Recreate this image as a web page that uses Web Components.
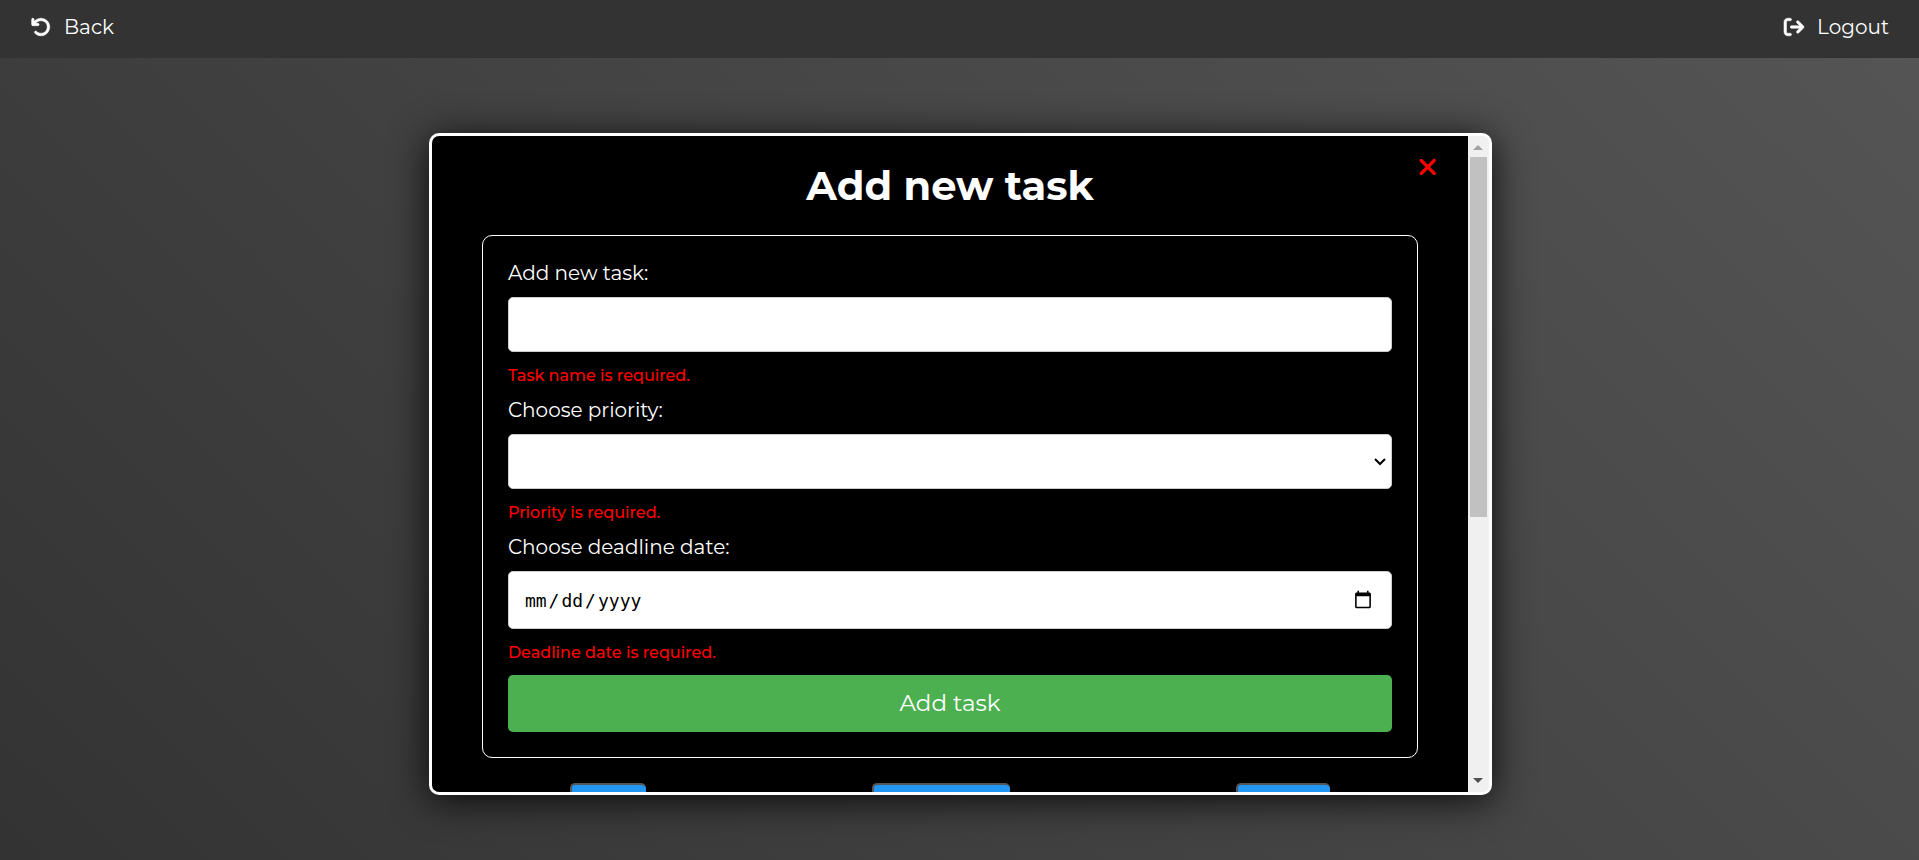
<!DOCTYPE html>
<html lang="en-US">
<head>
<meta charset="utf-8">
<meta name="viewport" content="width=device-width, initial-scale=1">
<title>Add new task</title>
<style>
  html, body { height: 100%; }
  body {
    margin: 0;
    font-family: Montserrat, Inter, sans-serif;
    font-size: 20px;
    line-height: 24px;
    color: #fff;
    background: linear-gradient(45deg, #333, #555);
  }
</style>
</head>
<body>
<task-app></task-app>

<script>
const ICONS = {
  back: ['0 0 512 512', 'M125.7 160H176c17.7 0 32 14.3 32 32s-14.3 32-32 32H48c-17.7 0-32-14.3-32-32V64c0-17.7 14.3-32 32-32s32 14.3 32 32v51.2L97.6 97.6c87.5-87.5 229.3-87.5 316.8 0s87.5 229.3 0 316.8s-229.3 87.5-316.8 0c-12.5-12.5-12.5-32.8 0-45.3s32.8-12.5 45.3 0c62.5 62.5 163.8 62.5 226.3 0s62.5-163.8 0-226.3s-163.8-62.5-226.3 0L125.7 160z'],
  logout: ['0 0 512 512', 'M502.6 278.6c12.5-12.5 12.5-32.8 0-45.3l-128-128c-12.5-12.5-32.8-12.5-45.3 0s-12.5 32.8 0 45.3L402.7 224 192 224c-17.7 0-32 14.3-32 32s14.3 32 32 32l210.7 0-73.4 73.4c-12.5 12.5-12.5 32.8 0 45.3s32.8 12.5 45.3 0l128-128zM160 96c17.7 0 32-14.3 32-32s-14.3-32-32-32L96 32C43 32 0 75 0 128L0 384c0 53 43 96 96 96l64 0c17.7 0 32-14.3 32-32s-14.3-32-32-32l-64 0c-17.7 0-32-14.3-32-32l0-256c0-17.7 14.3-32 32-32l64 0z'],
  close: ['0 0 384 512', 'M342.6 150.6c12.5-12.5 12.5-32.8 0-45.3s-32.8-12.5-45.3 0L192 210.7 86.6 105.4c-12.5-12.5-32.8-12.5-45.3 0s-12.5 32.8 0 45.3L146.7 256 41.4 361.4c-12.5 12.5-12.5 32.8 0 45.3s32.8 12.5 45.3 0L192 301.3 297.4 406.6c12.5 12.5 32.8 12.5 45.3 0s12.5-32.8 0-45.3L237.3 256 342.6 150.6z']
};
const icon = name =>
  `<svg viewBox="${ICONS[name][0]}" fill="currentColor" aria-hidden="true"><path d="${ICONS[name][1]}"/></svg>`;

class BaseElement extends HTMLElement {
  constructor() {
    super();
    this.attachShadow({ mode: 'open' });
  }
  connectedCallback() {
    this.shadowRoot.innerHTML = `<style>*{box-sizing:border-box}${this.styles()}</style>${this.markup()}`;
    this.ready();
  }
  ready() {}
}

/* Icon and label link of the top bar */
customElements.define('bar-link', class extends BaseElement {
  styles() {
    return `
      :host { display: block; }
      a { display: flex; align-items: center; gap: 13px; color: inherit; text-decoration: none; }
      svg { display: block; height: 20px; overflow: visible; stroke: currentColor; stroke-width: 14; }`;
  }
  markup() { return `<a href="#">${icon(this.getAttribute('icon'))}<slot></slot></a>`; }
});

customElements.define('top-bar', class extends BaseElement {
  styles() {
    return `
      :host { display: block; background: #333; }
      nav { display: flex; justify-content: space-between; padding: 15px 30px 19px 31px; }`;
  }
  markup() { return `<nav><slot></slot></nav>`; }
});

/* Label, control and error message */
customElements.define('form-field', class extends BaseElement {
  styles() {
    return `
      :host { display: flex; flex-direction: column; gap: 12px; }
      input, select {
        display: block; width: 100%; height: 55px; margin: 0;
        border: 1px solid #ccc; border-radius: 5px;
        background: #fff; color: #000;
        font-family: inherit; font-size: 20px;
      }
      input { padding: 12px 17px 12px 15px; }
      select {
        appearance: none; padding: 12px 24px 12px 15px;
        background: #fff url("data:image/svg+xml,%3Csvg xmlns='http://www.w3.org/2000/svg' width='12' height='8'%3E%3Cpath d='M1 1l5 5 5-5' fill='none' stroke='%23000' stroke-width='2'/%3E%3C/svg%3E") no-repeat right 5px center;
      }
      input[type=date] { height: 58px; font-family: "DejaVu Sans Mono", monospace; font-size: 18px; }
      ::-webkit-datetime-edit-text { padding: 0 1px; }
      ::-webkit-calendar-picker-indicator { width: 20px; height: 20px; padding: 1px; }
      p { margin: 0; color: #f00; font-size: 16px; font-weight: 500; }`;
  }
  markup() {
    const type = this.getAttribute('type');
    const control = type === 'select'
      ? `<select id="control"><option></option></select>`
      : `<input id="control" type="${type}">`;
    return `<label for="control">${this.getAttribute('label')}</label>${control}<p><slot></slot></p>`;
  }
});

customElements.define('task-form', class extends BaseElement {
  styles() {
    return `
      :host { display: block; margin: 0 25px; }
      form {
        display: flex; flex-direction: column; gap: 10px;
        padding: 25px; border: 1px solid #fff; border-radius: 10px;
      }
      button {
        height: 57px; padding: 0 0 2px; border: 0; border-radius: 5px;
        background: #4caf50; color: #fff;
        font-family: inherit; font-size: 23px;
      }`;
  }
  markup() {
    return `<form novalidate>
      <form-field type="text" label="Add new task:">Task name is required.</form-field>
      <form-field type="select" label="Choose priority:">Priority is required.</form-field>
      <form-field type="date" label="Choose deadline date:">Deadline date is required.</form-field>
      <button type="button">Add task</button>
    </form>`;
  }
});

/* Filter buttons above the task list */
customElements.define('task-filters', class extends BaseElement {
  styles() {
    return `
      :host { display: flex; justify-content: space-around; }
      button {
        height: 50px; padding: 0;
        border: 2px solid; border-color: #555 #222 #222 #555;
        border-right-width: 0; border-radius: 5px; background: #2196f3;
      }
      .short { width: 76px; }
      .long { width: 138px; }
      .medium { width: 94px; }`;
  }
  markup() {
    return `<button type="button" class="short" aria-label="All"></button>
      <button type="button" class="long" aria-label="Completed"></button>
      <button type="button" class="medium" aria-label="Active"></button>`;
  }
});

/* Vertical scroll bar, kept in step with the pane beside it */
customElements.define('scroll-rail', class extends BaseElement {
  styles() {
    return `
      :host { display: flex; flex-direction: column; flex: none; width: 21px; background: #f0f0f0; }
      svg { display: block; flex: none; width: 21px; height: 21px; }
      .track { flex: 1; min-height: 0; padding: 0 2px; }
      .thumb { width: 17px; background: #c1c1c1; }`;
  }
  markup() {
    return `<svg viewBox="0 0 21 21"><path d="M5 14h10l-5-5z" fill="#a3a3a3"/></svg>
      <div class="track"><div class="thumb"></div></div>
      <svg viewBox="0 0 21 21"><path d="M5 7h10l-5 5z" fill="#505050"/></svg>`;
  }
  follow(pane) {
    const track = this.shadowRoot.querySelector('.track');
    const thumb = this.shadowRoot.querySelector('.thumb');
    const update = () => {
      const scale = track.clientHeight / pane.scrollHeight;
      thumb.style.height = Math.round(pane.clientHeight * scale) + 'px';
      thumb.style.marginTop = Math.round(pane.scrollTop * scale) + 'px';
    };
    pane.addEventListener('scroll', update);
    new ResizeObserver(update).observe(pane);
    update();
  }
});

customElements.define('modal-window', class extends BaseElement {
  styles() {
    return `
      :host {
        display: flex; flex: 1; min-width: 0; overflow: hidden;
        border: 3px solid #fff; border-radius: 10px; background: #f0f0f0;
        box-shadow: 0 5px 38px rgba(0, 0, 0, .85);
      }
      .pane {
        position: relative; flex: 1; min-width: 0; overflow-y: auto;
        padding: 25px; background: #000; scrollbar-width: none;
      }
      h1 { margin: 0 0 25px; font-size: 40px; line-height: 49px; text-align: center; }
      .close {
        position: absolute; top: 18px; right: 31px;
        padding: 0; border: 0; background: none; color: #f00;
      }
      .close svg { display: block; height: 26px; }`;
  }
  markup() {
    return `<div class="pane">
        <h1>${this.getAttribute('heading')}</h1>
        <button type="button" class="close" aria-label="Close">${icon('close')}</button>
        <slot></slot>
      </div>
      <scroll-rail></scroll-rail>`;
  }
  ready() {
    this.shadowRoot.querySelector('scroll-rail').follow(this.shadowRoot.querySelector('.pane'));
  }
});

customElements.define('task-app', class extends BaseElement {
  styles() {
    return `
      :host { display: flex; flex-direction: column; height: 100vh; }
      main { display: flex; flex: 1; min-height: 0; padding: 75px 22.25% 65px 22.35%; }
      task-filters { margin-top: 25px; }
      .list { min-height: 397px; }`;
  }
  markup() {
    return `<top-bar>
        <bar-link icon="back">Back</bar-link>
        <bar-link icon="logout">Logout</bar-link>
      </top-bar>
      <main>
        <modal-window heading="Add new task">
          <task-form></task-form>
          <task-filters></task-filters>
          <div class="list"></div>
        </modal-window>
      </main>`;
  }
});
</script>
</body>
</html>
